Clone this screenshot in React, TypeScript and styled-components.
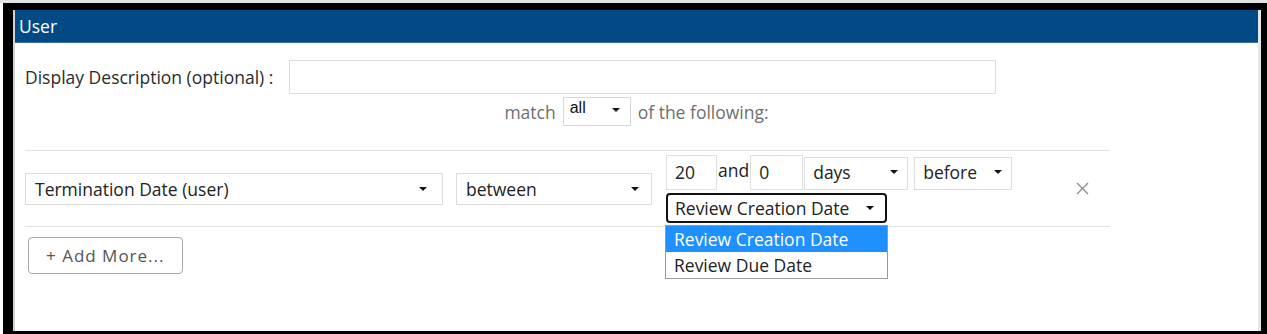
import React from 'react';
import styled, { createGlobalStyle } from 'styled-components';

const GlobalStyle = createGlobalStyle`
	html, body {
		margin: 0;
		padding: 0;
		background: #ffffff;
	}
	body {
		font-family: 'Open Sans', 'Noto Sans', sans-serif;
		font-size: 17.5px;
		color: #2b2b2b;
	}
`;

type Option = { label: string; selected?: boolean };

const valueSourceOptions: Option[] = [
	{ label: 'Review Creation Date', selected: true },
	{ label: 'Review Due Date' },
];

export default function App() {
	return (
		<>
			<GlobalStyle />
			<TopStrip />
			<Frame>
				<Panel>
					<Header>User</Header>
					<Body>
						<DescRow>
							<Label>Display Description (optional) :</Label>
							<TextInput $width={707} $height={34} />
						</DescRow>
						<MatchRow>
							<MutedText>match</MutedText>
							<MatchSelect>
								<span>all</span>
								<Arrow />
							</MatchSelect>
							<MutedText>of the following:</MutedText>
						</MatchRow>
						<ConditionTable>
							<ConditionRow>
								<Select $width={418} $arrowGap={15}>
									<span>Termination Date (user)</span>
									<Arrow />
								</Select>
								<Select $width={196} $arrowGap={12}>
									<span>between</span>
									<Arrow />
								</Select>
								<ValueBlock>
									<ValueLine>
										<NumberBox>20</NumberBox>
										<AndText>and</AndText>
										<NumberBox $narrow>0</NumberBox>
										<SmallSelect $width={104}>
											<span>days</span>
											<Arrow />
										</SmallSelect>
										<SmallSelect $width={98}>
											<span>before</span>
											<Arrow />
										</SmallSelect>
									</ValueLine>
									<DropdownWrap>
										<FocusedSelect>
											<span>Review Creation Date</span>
											<Arrow />
										</FocusedSelect>
										<OptionList>
											{valueSourceOptions.map((o) => (
												<OptionItem key={o.label} $selected={o.selected}>
													{o.label}
												</OptionItem>
											))}
										</OptionList>
									</DropdownWrap>
								</ValueBlock>
								<RemoveButton aria-label="remove">
									<svg width="13" height="13" viewBox="0 0 13 13">
										<path d="M1 1 L12 12 M12 1 L1 12" stroke="#8a8a8a" strokeWidth="1.3" fill="none" />
									</svg>
								</RemoveButton>
							</ConditionRow>
						</ConditionTable>
						<AddMoreButton>+ Add More...</AddMoreButton>
					</Body>
				</Panel>
			</Frame>
		</>
	);
}

const TopStrip = styled.div`
	height: 3px;
	background: #e4e4e4;
`;
const Frame = styled.div`
	margin-left: 3px;
	height: 321px;
	border-style: solid;
	border-color: #000;
	border-width: 7px 6px 3px 10px;
	background: #fff;
`;
const Panel = styled.div`
	height: 100%;
	box-sizing: border-box;
	border-left: 2px solid #d2d2d2;
	border-right: 3px solid #e6e6e6;
	display: flex;
	flex-direction: column;
`;
const Header = styled.div`
	height: 33px;
	background: #014a85;
	color: #fff;
	display: flex;
	align-items: center;
	padding-left: 4px;
	font-size: 17.5px;
	border-bottom: 1px solid #3d6fa0;
	box-sizing: border-box;
`;
const Body = styled.div`
	padding: 17px 0 0 10px;
	display: flex;
	flex-direction: column;
`;
const DescRow = styled.div`
	display: flex;
	align-items: center;
	gap: 16px;
`;
const Label = styled.span`
	color: #2b2b2b;
`;
const TextInput = styled.div<{ $width: number; $height: number }>`
	width: ${(p) => p.$width}px;
	height: ${(p) => p.$height}px;
	box-sizing: border-box;
	border: 1px solid #dcdcdc;
	background: #fff;
`;
const MatchRow = styled.div`
	display: flex;
	align-items: center;
	justify-content: center;
	gap: 7px;
	margin-top: 3px;
	margin-left: -10px;
`;
const MutedText = styled.span`
	color: #6e6e6e;
`;
const Arrow = styled.i`
	display: block;
	width: 0;
	height: 0;
	border-left: 4px solid transparent;
	border-right: 4px solid transparent;
	border-top: 4px solid #111;
	flex-shrink: 0;
`;
const MatchSelect = styled.div`
	width: 68px;
	height: 29px;
	box-sizing: border-box;
	border: 1px solid #d6d6d6;
	display: flex;
	align-items: flex-start;
	justify-content: space-between;
	padding: 1px 10px 0 6px;
	font-family: 'Liberation Sans', Arial, sans-serif;
	font-size: 16px;
	color: #111;

	${Arrow} {
		margin-top: 9px;
	}
`;
const ConditionTable = styled.div`
	width: 1085px;
	margin-top: 24px;
	border-top: 1px solid #e2e2e2;
	border-bottom: 1px solid #e2e2e2;
`;
const ConditionRow = styled.div`
	height: 75px;
	display: flex;
	align-items: center;
`;
const Select = styled.div<{ $width: number; $arrowGap: number }>`
	width: ${(p) => p.$width}px;
	height: 32px;
	box-sizing: border-box;
	border: 1px solid #dcdcdc;
	display: flex;
	align-items: center;
	justify-content: space-between;
	padding: 0 ${(p) => p.$arrowGap}px 0 9px;
	margin-right: 13px;
	color: #222;
`;
const ValueBlock = styled.div`
	display: flex;
	flex-direction: column;
	gap: 3px;
	margin-left: 1px;
`;
const ValueLine = styled.div`
	display: flex;
	align-items: flex-start;
`;
const NumberBox = styled.div<{ $narrow?: boolean }>`
	width: ${(p) => (p.$narrow ? 53 : 51)}px;
	height: 35px;
	box-sizing: border-box;
	border: 1px solid #e0e0e0;
	padding: 4px 0 0 8px;
	color: #222;
`;
const AndText = styled.span`
	padding: 0 1px;
	line-height: 30px;
	color: #222;
`;
const SmallSelect = styled.div<{ $width: number }>`
	width: ${(p) => p.$width}px;
	height: 33px;
	margin: 2px 0 0 1px;
	& + & {
		margin-left: 6px;
	}
	box-sizing: border-box;
	border: 1px solid #dcdcdc;
	display: flex;
	align-items: center;
	justify-content: space-between;
	padding: 0 9px 3px 8px;
	color: #222;
`;
const DropdownWrap = styled.div`
	position: relative;
	width: 221px;
`;
const FocusedSelect = styled.div`
	height: 30px;
	box-sizing: border-box;
	border: 2px solid #111;
	border-radius: 4px;
	display: flex;
	align-items: center;
	justify-content: space-between;
	padding: 0 11px 0 7px;
	color: #222;
`;
const OptionList = styled.div`
	position: absolute;
	top: 32px;
	left: -1px;
	width: 223px;
	box-sizing: border-box;
	border: 1px solid #9a9a9a;
	background: #fff;
	z-index: 5;
`;
const OptionItem = styled.div<{ $selected?: boolean }>`
	height: 26px;
	display: flex;
	align-items: center;
	padding-left: 8px;
	background: ${(p) => (p.$selected ? '#1e90ff' : '#fff')};
	color: ${(p) => (p.$selected ? '#fff' : '#222')};
`;
const RemoveButton = styled.div`
	margin-left: auto;
	margin-right: 21px;
	width: 13px;
	height: 13px;
	display: flex;
`;
const AddMoreButton = styled.div`
	margin: 10px 0 0 3px;
	width: 155px;
	height: 37px;
	box-sizing: border-box;
	border: 1px solid #a9a9a9;
	border-radius: 4px;
	display: flex;
	align-items: center;
	padding-left: 17px;
	font-size: 17px;
	letter-spacing: 1px;
	color: #555;
`;
